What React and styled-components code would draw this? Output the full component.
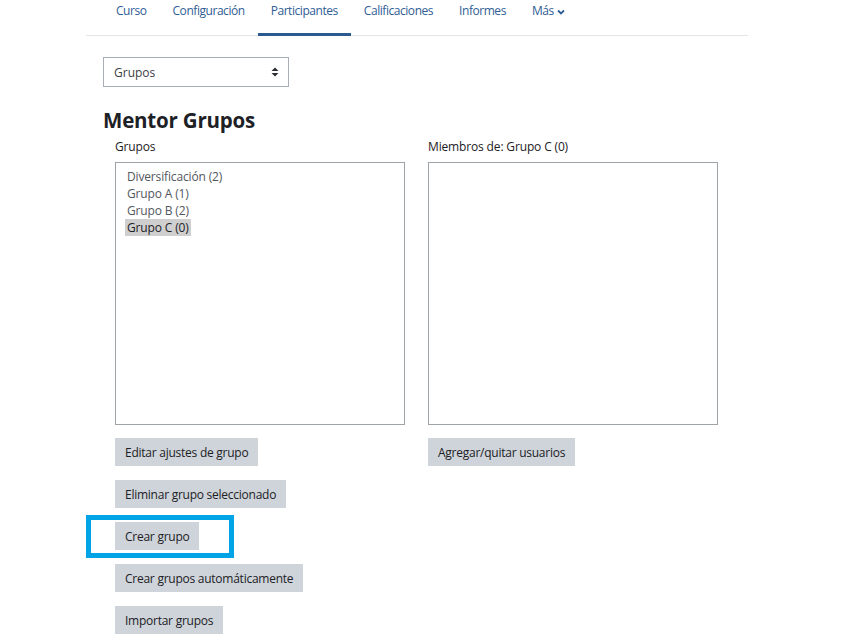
import React from "react";
import styled, { createGlobalStyle } from "styled-components";

const Global = createGlobalStyle`
  html, body { margin: 0; padding: 0; background: #fff; }
  body { font-family: "Open Sans", "Noto Sans", sans-serif; color: #1d2125; }
`;

const Page = styled.div`
  width: 662px;
  margin-left: 86px;
`;

const Nav = styled.nav`
  display: flex;
  height: 36px;
  padding-left: 17px;
  border-bottom: 1px solid #e3e6e9;
  box-sizing: border-box;
`;

const NavLink = styled.a`
  display: flex;
  align-items: flex-start;
  gap: 3px;
  padding: 2px 13px 0;
  height: 36px;
  box-sizing: border-box;
  font-size: 12px;
  line-height: 18px;
  color: #2f5d95;
  text-decoration: none;
  border-bottom: 3px solid ${(p) => (p.$active ? "#2d5a8e" : "transparent")};
  margin-bottom: -1px;
  letter-spacing: -0.45px;
`;

const Body = styled.div`
  padding: 21px 0 0 17px;
`;

const Select = styled.div`
  width: 186px;
  height: 30px;
  box-sizing: border-box;
  border: 1px solid #a9aeb4;
  display: flex;
  align-items: center;
  justify-content: space-between;
  padding: 0 9px 0 10px;
  font-size: 12px;
  color: #3b4046;
`;

const Heading = styled.h2`
  margin: 21px 0 0;
  font-size: 20.5px;
  line-height: 25px;
  font-weight: 700;
  color: #1d2125;
  letter-spacing: -0.2px;
`;

const Columns = styled.div`
  display: grid;
  grid-template-columns: 290px 290px;
  column-gap: 23px;
  padding-left: 12px;
  margin-top: 5px;
`;

const Column = styled.div`
  display: flex;
  flex-direction: column;
  align-items: flex-start;
`;

const Label = styled.div`
  font-size: 12px;
  line-height: 18px;
  color: #1d2125;
  letter-spacing: -0.15px;
`;

const ListBox = styled.div`
  margin-top: 6px;
  width: 290px;
  height: 263px;
  box-sizing: border-box;
  border: 1px solid #9ea3a8;
  padding: 5px 9px;
  display: flex;
  flex-direction: column;
  align-items: flex-start;
`;

const Option = styled.div`
  font-size: 12px;
  line-height: 17px;
  padding: 0 2px;
  color: ${(p) => (p.$selected ? "#1d2125" : "#52575d")};
  background: ${(p) => (p.$selected ? "#cfcfcf" : "transparent")};
  letter-spacing: -0.15px;
`;

const Buttons = styled.div`
  margin-top: 13px;
  display: flex;
  flex-direction: column;
  align-items: flex-start;
  gap: 14px;
`;

const Button = styled.button`
  position: relative;
  height: 28px;
  padding: 0 10px;
  border: none;
  background: #ced4da;
  font-family: inherit;
  font-size: 12px;
  color: #1d2125;
  letter-spacing: -0.25px;
  cursor: pointer;
`;

const Highlight = styled.span`
  position: absolute;
  left: -29px;
  top: -7px;
  width: 148px;
  height: 43px;
  box-sizing: border-box;
  border: 5px solid #00a3e6;
  pointer-events: none;
`;

const Arrows = () => (
  <svg width="8" height="10" viewBox="0 0 8 10">
    <path d="M0.5 4 L4 0.5 L7.5 4 Z" fill="#2b2f33" />
    <path d="M0.5 6 L4 9.5 L7.5 6 Z" fill="#2b2f33" />
  </svg>
);

const Chevron = () => (
  <svg width="8" height="8" viewBox="0 0 8 8" style={{ marginTop: 6 }}>
    <path d="M1 2.5 L4 5.5 L7 2.5" stroke="#2f5d95" strokeWidth="1.8" fill="none" />
  </svg>
);

export default function App() {
  const groups = ["Diversificación (2)", "Grupo A (1)", "Grupo B (2)", "Grupo C (0)"];
  return (
    <>
      <Global />
      <Page>
        <Nav>
          <NavLink>Curso</NavLink>
          <NavLink>Configuración</NavLink>
          <NavLink $active>Participantes</NavLink>
          <NavLink>Calificaciones</NavLink>
          <NavLink>Informes</NavLink>
          <NavLink>
            Más <Chevron />
          </NavLink>
        </Nav>
        <Body>
          <Select>
            <span>Grupos</span>
            <Arrows />
          </Select>
          <Heading>Mentor Grupos</Heading>
          <Columns>
            <Column>
              <Label>Grupos</Label>
              <ListBox>
                {groups.map((g, i) => (
                  <Option key={g} $selected={i === 3}>
                    {g}
                  </Option>
                ))}
              </ListBox>
              <Buttons>
                <Button>Editar ajustes de grupo</Button>
                <Button>Eliminar grupo seleccionado</Button>
                <Button>
                  Crear grupo
                  <Highlight />
                </Button>
                <Button>Crear grupos automáticamente</Button>
                <Button>Importar grupos</Button>
              </Buttons>
            </Column>
            <Column>
              <Label>Miembros de: Grupo C (0)</Label>
              <ListBox />
              <Buttons>
                <Button>Agregar/quitar usuarios</Button>
              </Buttons>
            </Column>
          </Columns>
        </Body>
      </Page>
    </>
  );
}
